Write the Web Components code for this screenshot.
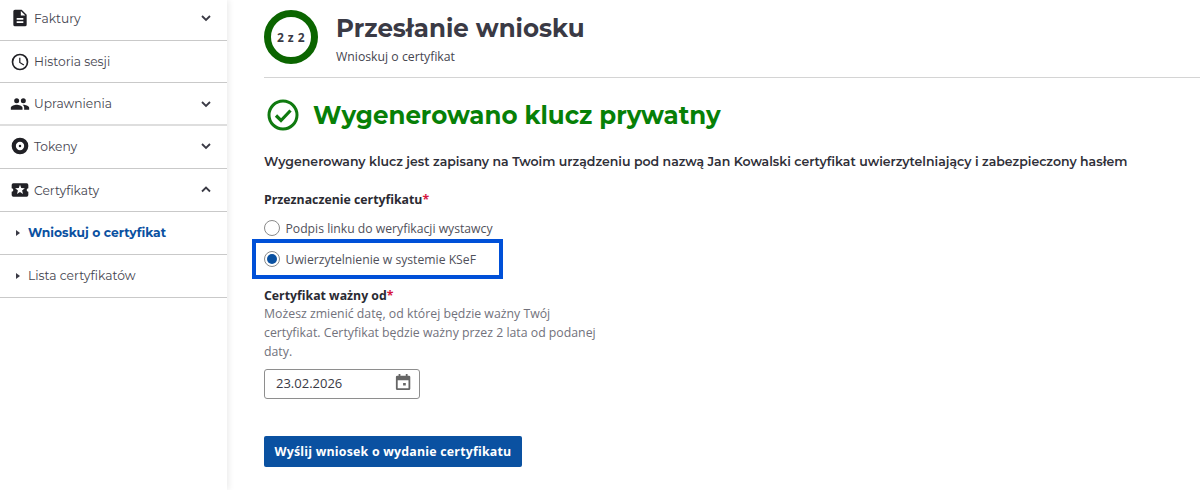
<!DOCTYPE html>
<html lang="pl">
<head>
<meta charset="utf-8">
<title>Przesłanie wniosku</title>
<style>
html, body { margin: 0; height: 490px; overflow: hidden; background: #fff; }
body { font-family: "Open Sans", sans-serif; color: #3a3a45; }
</style>
</head>
<body>
<app-shell>
  <side-menu slot="side">
    <menu-row label="Faktury" chevron="down" height="41" pad="4">
      <svg slot="icon" width="20" height="20" viewBox="0 0 24 24"><path fill="#212126" d="M14 2H6a2 2 0 0 0-2 2v16a2 2 0 0 0 2 2h12a2 2 0 0 0 2-2V8zm2 16H8v-2h8zm0-4H8v-2h8zm-3-5V3.500L18.500 9z"/></svg>
    </menu-row>
    <menu-row label="Historia sesji" height="42">
      <svg slot="icon" width="20" height="20" viewBox="0 0 24 24"><path fill="#212126" d="M12 2a10 10 0 1 0 0 20 10 10 0 0 0 0-20zm0 18a8 8 0 1 1 0-16 8 8 0 0 1 0 16zm.5-13H11v6l5.200 3.100.8-1.200-4.500-2.700z"/></svg>
    </menu-row>
    <menu-row label="Uprawnienia" chevron="down" thick>
      <svg slot="icon" width="20" height="20" viewBox="0 0 24 24"><path fill="#212126" d="M16 11a3 3 0 1 0 0-6 3 3 0 0 0 0 6zm-8 0a3 3 0 1 0 0-6 3 3 0 0 0 0 6zm0 2c-2.300 0-7 1.200-7 3.500V19h14v-2.500C15 14.200 10.300 13 8 13zm8 0h-1c1.200.9 2 2 2 3.500V19h6v-2.500c0-2.300-4.700-3.500-7-3.500z"/></svg>
    </menu-row>
    <menu-row label="Tokeny" chevron="down" pad="2">
      <svg slot="icon" width="20" height="20" viewBox="0 0 24 24"><path fill="#212126" d="M12 2a10 10 0 1 0 0 20 10 10 0 0 0 0-20zm0 15a5 5 0 1 1 0-10 5 5 0 0 1 0 10zm0-6.500a1.500 1.500 0 1 0 0 3 1.500 1.500 0 0 0 0-3z"/></svg>
    </menu-row>
    <menu-row label="Certyfikaty" chevron="up">
      <svg slot="icon" width="20" height="20" viewBox="0 0 24 24"><path fill="#212126" d="M22 10V6a2 2 0 0 0-2-2H4a2 2 0 0 0-2 2v4a2 2 0 0 1 0 4v4a2 2 0 0 0 2 2h16a2 2 0 0 0 2-2v-4a2 2 0 0 1 0-4zm-6.400 6.800L12 14.500l-3.600 2.300 1.100-4.100-3.300-2.700 4.300-.3L12 5.700l1.500 4 4.300.3-3.300 2.700z"/></svg>
    </menu-row>
    <sub-row label="Wnioskuj o certyfikat" active></sub-row>
    <sub-row label="Lista certyfikatów"></sub-row>
  </side-menu>
  <page-head step="2 z 2" title="Przesłanie wniosku" sub="Wnioskuj o certyfikat"></page-head>
  <success-title>Wygenerowano klucz prywatny</success-title>
  <info-line>Wygenerowany klucz jest zapisany na Twoim urządzeniu pod nazwą Jan Kowalski certyfikat uwierzytelniający i zabezpieczony hasłem</info-line>
  <field-label>Przeznaczenie certyfikatu</field-label>
  <radio-row>Podpis linku do weryfikacji wystawcy</radio-row>
  <radio-row checked>Uwierzytelnienie w systemie KSeF</radio-row>
  <date-field label="Certyfikat ważny od" value="23.02.2026">Możesz zmienić datę, od której będzie ważny Twój certyfikat. Certyfikat będzie ważny przez 2 lata od podanej daty.</date-field>
  <send-button>Wyślij wniosek o wydanie certyfikatu</send-button>
</app-shell>

<script>
const HEAD_FONT = '"Montserrat", "Inter", "Noto Sans", sans-serif'

class AppShell extends HTMLElement {
    constructor() {
        super()
        this.attachShadow({mode: 'open'})
    }
    connectedCallback() {
        this.shadowRoot.innerHTML = `<style>
        :host { display: flex; height: 490px; }
        .side { flex: 0 0 227px; box-shadow: 2px 0 6px rgba(0,0,0,.08); }
        .main { flex: 1; min-width: 0; padding: 0 0 0 37px; }
        </style>
        <div class="side"><slot name="side"></slot></div>
        <div class="main"><slot></slot></div>`
    }
}

class SideMenu extends HTMLElement {
    constructor() {
        super()
        this.attachShadow({mode: 'open'})
    }
    connectedCallback() {
        this.shadowRoot.innerHTML = `<style>
        :host { display: block; }
        </style><slot></slot>`
    }
}

class MenuRow extends HTMLElement {
    constructor() {
        super()
        this.attachShadow({mode: 'open'})
    }
    connectedCallback() {
        const dir = this.getAttribute('chevron')
        let chevron = ''
        if (dir) {
            const d = dir === 'up' ? 'M3 8.500l4-4 4 4' : 'M3 5l4 4 4-4'
            chevron = `<svg class="chev" width="14" height="14" viewBox="0 0 14 14"><path d="${d}" fill="none" stroke="#3a3a45" stroke-width="1.800"/></svg>`
        }
        const height = this.getAttribute('height') || 43
        const pad = this.getAttribute('pad') || 0
        this.shadowRoot.innerHTML = `<style>
        :host { display: block; box-sizing: border-box; height: ${height}px; border-bottom: ${this.hasAttribute('thick') ? '2px solid #dedede' : '1px solid #c9c9c9'}; }
        .row { display: flex; align-items: center; box-sizing: border-box; height: 100%; padding: 0 14px ${pad}px 10px; gap: 4px; font: 12.250px ${HEAD_FONT}; color: #45454f; }
        .ico { display: flex; width: 20px; height: 20px; }
        .txt { flex: 1; }
        </style>
        <div class="row"><span class="ico"><slot name="icon"></slot></span><span class="txt">${this.getAttribute('label')}</span>${chevron}</div>`
    }
}

class SubRow extends HTMLElement {
    constructor() {
        super()
        this.attachShadow({mode: 'open'})
    }
    connectedCallback() {
        const active = this.hasAttribute('active')
        this.shadowRoot.innerHTML = `<style>
        :host { display: block; box-sizing: border-box; height: 43px; border-bottom: 1px solid #c9c9c9; }
        .row { display: flex; align-items: center; box-sizing: border-box; height: 100%; padding: 0 0 1px 16px; gap: 8px; font: ${active ? 700 : 400} 12.300px ${HEAD_FONT}; color: ${active ? '#0a51a1' : '#45454f'}; }
        .tri { width: 0; height: 0; border-left: 4px solid #3a3a45; border-top: 3px solid transparent; border-bottom: 3px solid transparent; }
        </style>
        <div class="row"><span class="tri"></span><span>${this.getAttribute('label')}</span></div>`
    }
}

class PageHead extends HTMLElement {
    constructor() {
        super()
        this.attachShadow({mode: 'open'})
    }
    connectedCallback() {
        this.shadowRoot.innerHTML = `<style>
        :host { display: flex; box-sizing: border-box; height: 78px; padding-top: 10px; gap: 18px; border-bottom: 1px solid #d4d4d4; }
        .ring { box-sizing: border-box; width: 54px; height: 54px; border: 7px solid #0b6500; border-radius: 50%; display: flex; align-items: center; justify-content: center; font: 700 12px "Open Sans", sans-serif; letter-spacing: .4px; }
        h1 { margin: 2px 0 0; font: 700 24.500px/32px ${HEAD_FONT}; color: #3a3a45; }
        p { margin: 5px 0 0; font: 12.250px/16px "Open Sans", sans-serif; color: #45454f; }
        </style>
        <div class="ring">${this.getAttribute('step')}</div>
        <div><h1>${this.getAttribute('title')}</h1><p>${this.getAttribute('sub')}</p></div>`
    }
}

class SuccessTitle extends HTMLElement {
    constructor() {
        super()
        this.attachShadow({mode: 'open'})
    }
    connectedCallback() {
        this.shadowRoot.innerHTML = `<style>
        :host { display: flex; align-items: center; gap: 14px; margin-top: 20px; padding-left: 3px; height: 34px; font: 700 24.500px ${HEAD_FONT}; color: #078007; }
        svg { flex: none; }
        </style>
        <svg width="32" height="32" viewBox="0 0 32 32"><circle cx="16" cy="16" r="14" fill="none" stroke="#0f7a0f" stroke-width="3"/><path d="M9 16.500l5 5 9.500-10" fill="none" stroke="#0f7a0f" stroke-width="3.200"/></svg>
        <slot></slot>`
    }
}

class InfoLine extends HTMLElement {
    constructor() {
        super()
        this.attachShadow({mode: 'open'})
    }
    connectedCallback() {
        this.shadowRoot.innerHTML = `<style>
        :host { display: block; margin-top: 20px; font: 600 12.500px/20px ${HEAD_FONT}; color: #2f2f38; white-space: nowrap; }
        </style><slot></slot>`
    }
}

class FieldLabel extends HTMLElement {
    constructor() {
        super()
        this.attachShadow({mode: 'open'})
    }
    connectedCallback() {
        this.shadowRoot.innerHTML = `<style>
        :host { display: block; margin-top: 19px; font: 700 12.300px/18px "Open Sans", sans-serif; color: #2b2b33; }
        i { font-style: normal; color: #d6173f; }
        </style><slot></slot><i>*</i>`
    }
}

class RadioRow extends HTMLElement {
    constructor() {
        super()
        this.attachShadow({mode: 'open'})
    }
    connectedCallback() {
        const checked = this.hasAttribute('checked')
        this.shadowRoot.innerHTML = `<style>
        :host { display: flex; align-items: center; gap: 5.500px; width: fit-content; box-sizing: border-box; font: 12.200px "Open Sans", sans-serif; color: #50505a; }
        :host([checked]) { width: 251px; height: 40px; margin: -1px 0 0 -12px; padding-left: 8px; border: 4px solid #0050d8; }
        :host(:not([checked])) { height: 24px; margin-top: 7px; }
        .dot { box-sizing: border-box; width: 16px; height: 16px; border: 1.500px solid #8a8a8a; border-radius: 50%; display: flex; align-items: center; justify-content: center; background: #fff; }
        .dot b { width: 10px; height: 10px; border-radius: 50%; background: #0a51a1; }
        </style>
        <span class="dot">${checked ? '<b></b>' : ''}</span><slot></slot>`
    }
}

class DateField extends HTMLElement {
    constructor() {
        super()
        this.attachShadow({mode: 'open'})
    }
    connectedCallback() {
        this.shadowRoot.innerHTML = `<style>
        :host { display: block; margin-top: 8px; width: 345px; font-family: "Open Sans", sans-serif; }
        .lab { font: 700 12.300px/18px "Open Sans", sans-serif; color: #2b2b33; }
        .lab i { font-style: normal; color: #d6173f; }
        .hint { margin-top: -1px; font-size: 12.300px; line-height: 19px; color: #72727c; }
        .box { box-sizing: border-box; display: flex; align-items: center; justify-content: space-between; width: 156px; height: 30px; margin-top: 8px; padding: 0 8px 2px 11px; border: 1px solid #8e8e8e; border-radius: 3px; font-size: 13px; color: #3a3a45; }
        .box svg { margin-bottom: 2px; }
        </style>
        <div class="lab">${this.getAttribute('label')}<i>*</i></div>
        <div class="hint"><slot></slot></div>
        <div class="box"><span>${this.getAttribute('value')}</span>
        <svg width="16.200" height="18" viewBox="0 0 18 20"><path fill="#666" d="M4 1h2v2h6V1h2v2h1.500A1.500 1.500 0 0 1 17 4.500v13a1.500 1.500 0 0 1-1.500 1.500h-13A1.500 1.500 0 0 1 1 17.500v-13A1.500 1.500 0 0 1 2.500 3H4zM3 8v9h12V8zm6 3h3v3H9z" /></svg></div>`
    }
}

class SendButton extends HTMLElement {
    constructor() {
        super()
        this.attachShadow({mode: 'open'})
    }
    connectedCallback() {
        this.shadowRoot.innerHTML = `<style>
        :host { display: block; margin-top: 37px; width: fit-content; }
        button { display: block; box-sizing: border-box; width: 258px; height: 31px; padding: 0; border: 0; border-radius: 2px; background: #0a51a1; color: #fff; font: 700 12.400px "Open Sans", sans-serif; letter-spacing: .2px; }
        </style><button><slot></slot></button>`
    }
}

customElements.define('app-shell', AppShell)
customElements.define('side-menu', SideMenu)
customElements.define('menu-row', MenuRow)
customElements.define('sub-row', SubRow)
customElements.define('page-head', PageHead)
customElements.define('success-title', SuccessTitle)
customElements.define('info-line', InfoLine)
customElements.define('field-label', FieldLabel)
customElements.define('radio-row', RadioRow)
customElements.define('date-field', DateField)
customElements.define('send-button', SendButton)
</script>
</body>
</html>
